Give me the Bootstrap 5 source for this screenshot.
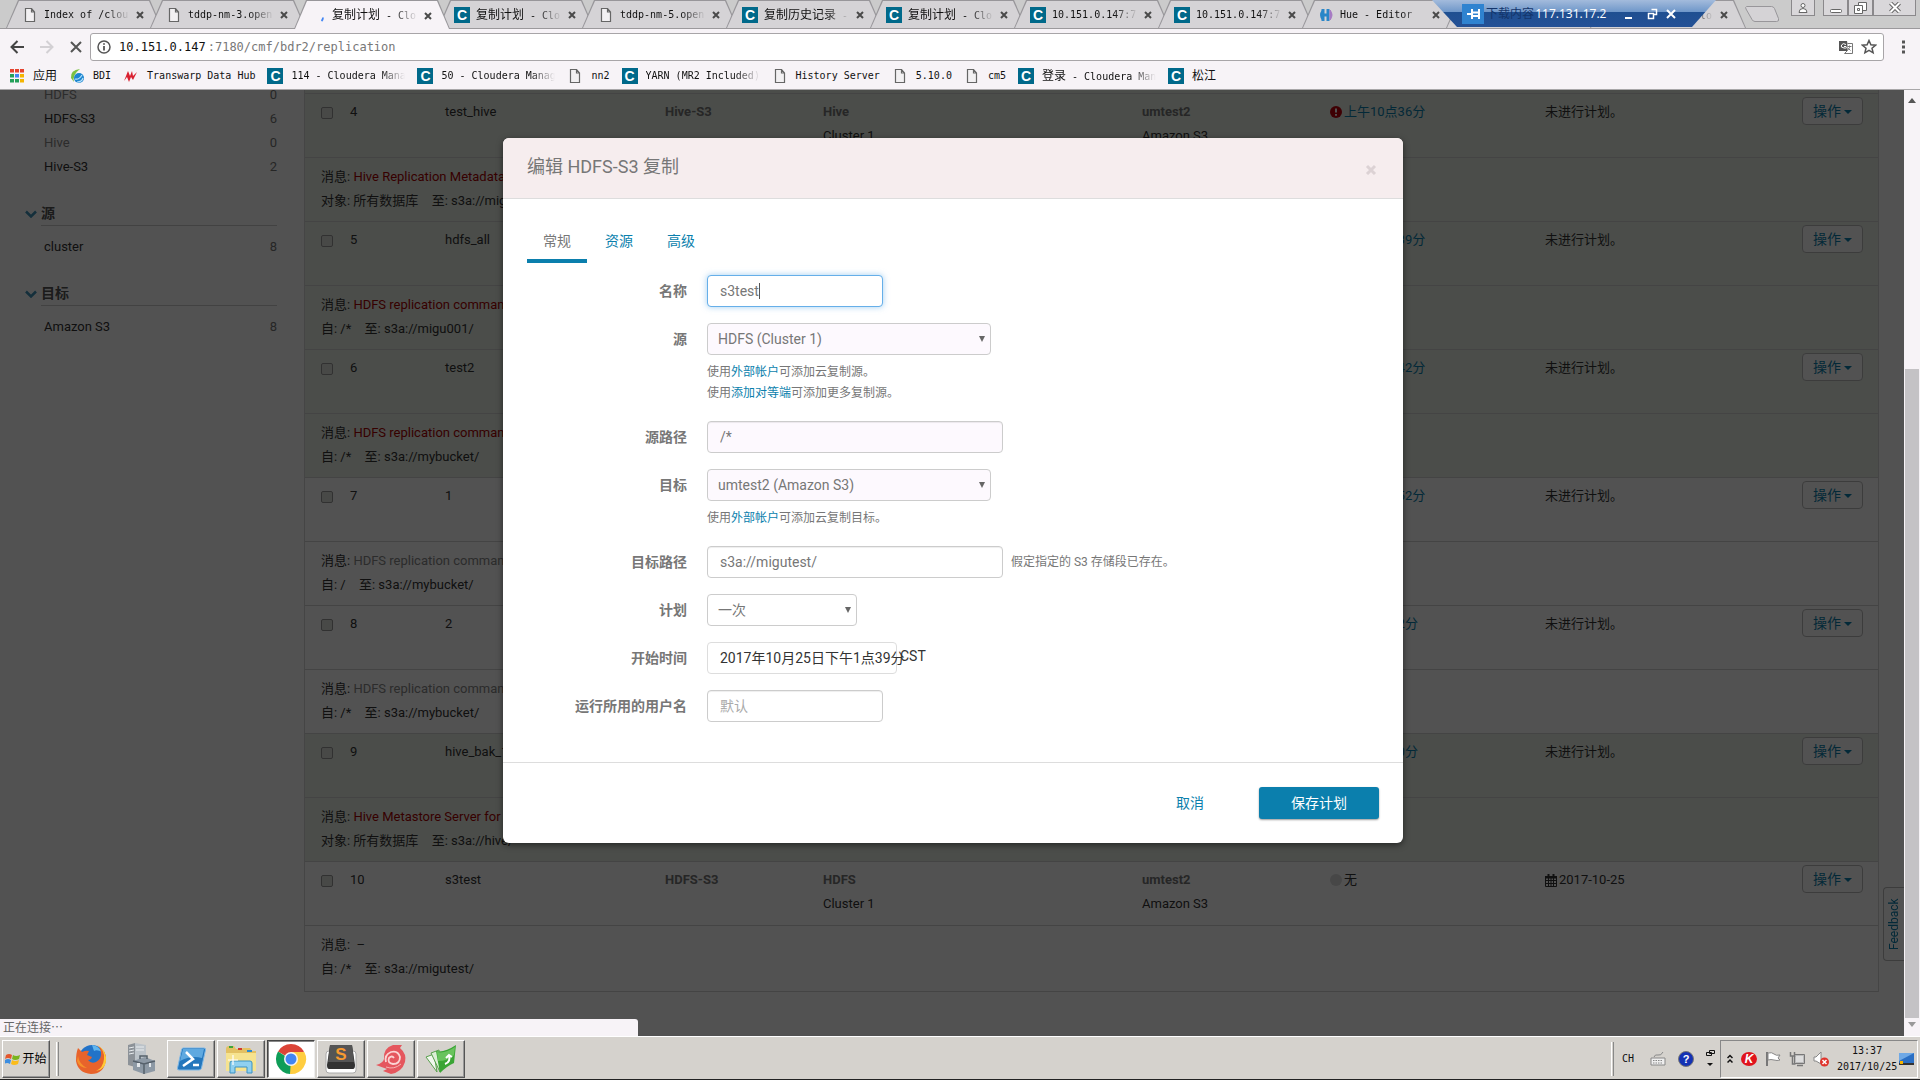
<!DOCTYPE html>
<html lang="zh-CN">
<head>
<meta charset="utf-8">
<meta name="viewport" content="width=device-width, initial-scale=1">
<title>复制计划 - Cloudera Manager</title>
<link rel="stylesheet" href="https://cdn.jsdelivr.net/npm/bootstrap@5.3.0/dist/css/bootstrap.min.css">
<style>
:root{--ui:"DejaVu Sans Mono","Noto Sans CJK SC",monospace;--web:Roboto,"Noto Sans CJK SC",sans-serif;--blue:#0b7fad;--chrome:#f7f3f7}
body{font-family:var(--web);font-size:13px;line-height:24px;color:#333;background:#fff}
a{text-decoration:none;color:var(--blue)}
svg{display:block;flex:none}
button{font-family:inherit}
.ui-font{font-family:var(--ui);font-size:10px;line-height:16px;color:#111}
.ui-font a{color:#111}
.zh{font-size:12px}
.bare{border:0;background:none;padding:0;color:inherit}
.clogo{width:16px;height:16px;background:#00698a;color:#fff;font:bold 14px/16px "Liberation Sans",sans-serif;text-align:center;flex:none}
.fade-end{white-space:nowrap;overflow:hidden;-webkit-mask-image:linear-gradient(90deg,#000 calc(100% - 24px),transparent);mask-image:linear-gradient(90deg,#000 calc(100% - 24px),transparent)}
/* tab strip */
.strip{height:29px;background:#cbcbcb;border-bottom:1px solid #9b999c;padding-left:6px}
.ctab{position:relative;width:156px;height:28px;margin-right:-12px;padding:2px 16px 0;gap:6px;flex:none}
.ctab::before,.ctab::after{content:"";position:absolute;inset:0;clip-path:polygon(0 100%,12px 0,calc(100% - 12px) 0,100% 100%);background:#98969a}
.ctab::after{inset:1px 1px 0 1px;background:#d5d3d6}
.ctab>*{position:relative;z-index:1}
.ctab.on{z-index:2;height:29px}
.ctab.on::after{background:var(--chrome)}
.ctab .ttl{width:86px}
.newtab{margin:0 0 0 10px}
.rdp{position:absolute;left:1432px;top:0;width:284px;height:27px;z-index:5;background:linear-gradient(#a3bbdc,#6f97c9 44%,#1f4f91 46%,#245196);clip-path:polygon(0 0,100% 0,calc(100% - 24px) 100%,25px 100%);color:#fff;font:12px/26px "Open Sans",sans-serif;padding:0 36px 0 30px}
.winbtn{height:16px;border:1px solid #8a888b;border-top:0;background:#d9d7da;padding:0;display:flex;align-items:center;justify-content:center}
/* toolbar */
.toolbar{height:36px;background:var(--chrome);padding:4px 12px 4px 10px}
.omni{height:28px;background:#fff;border:1px solid #a8a5a8;border-radius:3px;padding:0 6px}
.omni input{border:0;outline:0;font-family:var(--ui);font-size:12px;color:#777;background:none;width:100%}
.omni .host{font-size:12px}
.marks{height:25px;background:var(--chrome);border-bottom:1px solid #a9a7a9;padding:0 0 2px 9px;gap:12px}
.marks a{display:flex;align-items:center;gap:8px}
.marks .fade-end{max-width:114px}
.marks .plain{white-space:nowrap}
.ico16{width:16px;display:flex;justify-content:center;flex:none}
/* page */
.side{width:304px;flex:none;margin-top:-7px;padding-right:27px}
.side li{display:flex;justify-content:space-between;padding-left:44px;height:24px}
.side li span{color:#777}
.side .off a{color:#888}
.side li a{color:#333}
.side h6{margin:22px 0 9px;padding-left:25px;font-size:14px;line-height:24px;font-weight:700;color:#555}
.side h6 span{border-bottom:1px solid #ccc;height:25px}
.tail{height:3px;background:#e8efe5}
.listing{border:1px solid #d7d7d7;border-top:0;border-bottom:0;margin-right:25px}
.table.sched{table-layout:fixed;margin:0;font-size:13px;line-height:24px;color:#333;border-collapse:separate;border-spacing:0;border-bottom:1px solid #d2d2d2}
.table.sched>tbody>tr>td{border:0;border-top:1px solid #d2d2d2;padding:7px 8px 8px;height:64px;background:none;color:#333}
.table.sched>tbody>tr:nth-child(odd)>td{padding:6px 8px 9px}
.table.sched>tbody>tr:last-child>td{height:66px}
.table.sched>tbody>tr>td:first-child{padding-left:16px}
.table.sched .bad>td{background:#e8efe5}
.sched b{color:#777;font-weight:700}
.sched .err{color:#a80000}
.sched .dim{color:#888}
.sched .form-check-input{width:12px;height:12px;margin:7px 0 0;border-radius:2px;border-color:#999;background:#dfe3dc}
.cellicon{display:flex;align-items:center;gap:2px}
.late{padding-left:14px}
.opbtn{width:61px;height:28px;margin-top:-3px;border:1px solid #bbb;border-radius:4px;background:#fff;color:var(--blue);font-size:14px;line-height:22px;padding:0;white-space:nowrap}
.opbtn::after{content:"";display:inline-block;margin-left:3px;vertical-align:2px;border:4px solid transparent;border-top-color:currentColor;border-bottom:0}
.feedback{position:absolute;right:0;bottom:75px;width:21px;height:74px;border:1px solid #bbb;border-left:0;border-radius:0 4px 4px 0;background:#fff;color:var(--blue);writing-mode:vertical-rl;transform:rotate(180deg);font-size:12px;line-height:18px;padding:0;text-align:center}
.scrim{position:absolute;inset:0;background:rgba(0,0,0,.68);padding:48px 0 0 2px}
.dialog{width:900px;align-self:flex-start;background:#fff;border:0;border-radius:6px;box-shadow:0 2px 6px rgba(0,0,0,.5);overflow:hidden;color:#777;font-size:14px}
.dialog .modal-header{background:#f6edee;height:61px;padding:0 24px;border-bottom:1px solid #ddd;border-radius:0}
.dialog h4{font-size:18px;line-height:24px;font-weight:400;margin:0 0 2px}
.dialog .modal-body{padding:20px 24px 24px}
.dialog .nav{gap:2px;margin-bottom:12px}
.dialog .nav-link{padding:12px 16px 8px;line-height:20px;border:0;border-bottom:4px solid transparent;color:var(--blue)}
.dialog .nav-link.active{color:#777;border-color:#0b7fad}
.frow{display:flex;margin-bottom:16px;gap:20px}
.frow>label{width:160px;flex:none;text-align:right;font-weight:700;line-height:32px}
.frow .form-control,.frow .form-select{height:32px;padding:0 12px;font-size:14px;line-height:20px;color:#777;border:1px solid #ccc;border-radius:4px;background-color:#fff;box-shadow:inset 0 1px 1px rgba(0,0,0,.07)}
.frow .form-select{padding:0 24px 0 10px;box-shadow:none;background-image:url("data:image/svg+xml,%3Csvg xmlns='http://www.w3.org/2000/svg' viewBox='0 0 6 6'%3E%3Cpath d='M0 0h6L3 6z' fill='%23666'/%3E%3C/svg%3E");background-size:6px 6px;background-position:right 5px center}
.frow .tint{background-color:#fdf9fe}
.frow .focused{border-color:#66afe9;box-shadow:0 0 6px rgba(102,175,233,.6)}
.frow ::placeholder{color:#aaa}
.w176{width:176px}.w284{width:284px}.w296{width:296px}.w150{width:150px}
.caret{position:absolute;left:52px;top:8px;width:1px;height:16px;background:#555}
.hint{font-size:12px;line-height:21px;padding:7px 0 1px}
.hint-side{font-size:12px;line-height:32px;margin-left:8px}
.when{width:190px;height:32px;border:1px solid #ddd;border-radius:4px;background:#fff;color:#333;text-align:left;padding:0 12px;white-space:nowrap}
.zone{color:#333;line-height:28px;margin-left:3px}
.dialog .modal-footer{height:81px;padding:0 24px;border-top:1px solid #ddd;gap:9px}
.dialog .modal-footer>*{margin:0;width:120px;height:32px;padding:0;font-size:14px;border-radius:3px}
.dialog .btn-link{color:var(--blue);text-decoration:none}
.dialog .btn-primary{background:#0b7fad;border:0;box-shadow:0 1px 2px rgba(0,0,0,.4)}
.vbar{width:16px;background:var(--chrome);flex:none;padding:8px 0}
.vbar i{width:14px;background:#c4c2c5}
.gap-top{flex:266 0 0}.thumb{flex:652 0 0}
.statusbub{position:absolute;left:0;bottom:0;width:638px;height:17px;border-radius:0 3px 0 0;background:var(--chrome);color:#666;font-size:12px;line-height:19px;padding-left:3px}
/* taskbar */
.taskbar{height:44px;flex:none;background:#d5d2cd;border-top:1px solid #fff;border-bottom:1px solid #222;padding:3px 2px 2px}
.tbtn{width:48px;height:38px;margin-right:2px;padding:0;background:#d5d2cd;border:1px solid;border-color:#fff #555 #555 #fff;box-shadow:inset -1px -1px #999;display:flex;align-items:center;justify-content:center;flex:none}
.tbtn.flat{border-color:transparent;box-shadow:none}
.tbtn.down{background:#fff;border-color:#444 #eee #eee #444;box-shadow:inset 1px 1px #888}
.grip{width:3px;height:34px;border-left:1px solid #fff;border-right:1px solid #888}
.start{width:48px;gap:1px;font-size:12px;color:#000}
.tray{height:38px;width:198px;border:1px solid;border-color:#888 #fff #fff #888;padding:0 0 0 6px;gap:8px}
.clockbox{gap:2px}
</style>
<script src="https://cdn.jsdelivr.net/npm/bootstrap@5.3.0/dist/js/bootstrap.bundle.min.js"></script>
</head>
<body class="d-flex flex-column vh-100 overflow-hidden">
<svg width="0" height="0" class="position-absolute" aria-hidden="true">
<symbol id="doc" viewBox="0 0 12 14"><path d="M1.5.5h6l3 3.500v9.500h-9zM7.500.5v3.500h3" fill="#f2f0f2" stroke="#666" stroke-width="1.200"/></symbol>
<symbol id="ex" viewBox="0 0 8 8"><path d="M1 1l6 6M7 1L1 7" stroke="#4a4a4a" stroke-width="2"/></symbol>
<symbol id="chev" viewBox="0 0 12 8"><path d="M1 1.500l5 5 5-5" fill="none" stroke="#3f91b8" stroke-width="2.500"/></symbol>
</svg>

<header class="position-relative ui-font">
<div class="strip d-flex">
<div class="ctab d-flex align-items-center"><span class="ico16"><svg width="12" height="14"><use href="#doc"/></svg></span><a href="#" class="ttl fade-end">Index of /clou</a><button class="bare" aria-label="关闭"><svg width="8" height="8"><use href="#ex"/></svg></button></div>
<div class="ctab d-flex align-items-center"><span class="ico16"><svg width="12" height="14"><use href="#doc"/></svg></span><a href="#" class="ttl fade-end">tddp-nm-3.open</a><button class="bare" aria-label="关闭"><svg width="8" height="8"><use href="#ex"/></svg></button></div>
<div class="ctab on d-flex align-items-center"><span class="ico16"><svg width="16" height="16"><path d="M13 9.500q0 2-1.500 3.500" stroke="#4285f4" stroke-width="1.800" fill="none"/></svg></span><a href="#" class="ttl fade-end"><span class="zh">复制计划</span> - Clo</a><button class="bare" aria-label="关闭"><svg width="8" height="8"><use href="#ex"/></svg></button></div>
<div class="ctab d-flex align-items-center"><span class="clogo">C</span><a href="#" class="ttl fade-end"><span class="zh">复制计划</span> - Clo</a><button class="bare" aria-label="关闭"><svg width="8" height="8"><use href="#ex"/></svg></button></div>
<div class="ctab d-flex align-items-center"><span class="ico16"><svg width="12" height="14"><use href="#doc"/></svg></span><a href="#" class="ttl fade-end">tddp-nm-5.open</a><button class="bare" aria-label="关闭"><svg width="8" height="8"><use href="#ex"/></svg></button></div>
<div class="ctab d-flex align-items-center"><span class="clogo">C</span><a href="#" class="ttl fade-end"><span class="zh">复制历史记录</span> -</a><button class="bare" aria-label="关闭"><svg width="8" height="8"><use href="#ex"/></svg></button></div>
<div class="ctab d-flex align-items-center"><span class="clogo">C</span><a href="#" class="ttl fade-end"><span class="zh">复制计划</span> - Clo</a><button class="bare" aria-label="关闭"><svg width="8" height="8"><use href="#ex"/></svg></button></div>
<div class="ctab d-flex align-items-center"><span class="clogo">C</span><a href="#" class="ttl fade-end">10.151.0.147:7</a><button class="bare" aria-label="关闭"><svg width="8" height="8"><use href="#ex"/></svg></button></div>
<div class="ctab d-flex align-items-center"><span class="clogo">C</span><a href="#" class="ttl fade-end">10.151.0.147:7</a><button class="bare" aria-label="关闭"><svg width="8" height="8"><use href="#ex"/></svg></button></div>
<div class="ctab d-flex align-items-center"><svg width="16" height="16"><path d="M5 2v12M10 2v12M5 8h6" stroke="#2a86c8" stroke-width="3"/><path d="M4 3Q0 8 4 13" fill="#2a86c8"/><path d="M12 3q4 5 0 10z" fill="#a77bc4" stroke="#a77bc4"/></svg><a href="#" class="ttl fade-end">Hue - Editor</a><button class="bare" aria-label="关闭"><svg width="8" height="8"><use href="#ex"/></svg></button></div>
<div class="ctab" aria-hidden="true"></div>
<div class="ctab d-flex align-items-center"><span class="clogo">C</span><a href="#" class="ttl fade-end"><span class="zh">复制计划</span> - Clo</a><button class="bare" aria-label="关闭"><svg width="8" height="8"><use href="#ex"/></svg></button></div>
<button class="bare newtab" aria-label="新标签页"><svg width="36" height="20"><path d="M2.500 2.500h25q2 0 3 2l4 10q1 3-2 3H11q-2 0-3-2L2 5q-1-2 .5-2.500z" fill="#d5d3d6" stroke="#98969a"/></svg></button>
<div class="ms-auto d-flex pe-1">
<button class="winbtn me-2" style="width:24px" aria-label="用户"><svg width="12" height="12"><circle cx="6" cy="3.500" r="2" fill="#fff" stroke="#666"/><path d="M2 10.500q0-4 4-4t4 4z" fill="#fff" stroke="#666"/></svg></button>
<button class="winbtn" style="width:25px" aria-label="最小化"><svg width="12" height="12"><rect x=".5" y="7.500" width="11" height="3" rx="1" fill="#fff" stroke="#666"/></svg></button>
<button class="winbtn" style="width:25px" aria-label="还原"><svg width="13" height="12"><path d="M4.500.5h8v8h-8z" fill="#fff" stroke="#666"/><path d="M.5 3.500h8v8h-8z" fill="#fff" stroke="#666"/><path d="M3.500 6.500h2v2h-2z" fill="none" stroke="#666"/></svg></button>
<button class="winbtn" style="width:43px" aria-label="关闭窗口"><svg width="12" height="11"><path d="M1.500 1l9 9M10.500 1l-9 9" stroke="#666" stroke-width="4"/><path d="M1.500 1l9 9M10.500 1l-9 9" stroke="#fff" stroke-width="2"/></svg></button>
</div>
</div>
<div class="rdp d-flex align-items-center justify-content-between">
<svg width="22" height="20"><path d="M0 0h22v20H0z" fill="#2f83d0"/><path d="M5 10h5M10 5v10M17 5v10M10 12h7M10 8.500h7" stroke="#fff" stroke-width="2"/></svg>
<span class="zh" style="color:#14356b" aria-hidden="true">下载内容</span>
<span>117.131.17.2</span>
<svg width="56" height="16" class="ms-3"><path d="M1 12h7M51 4l-8 8M43 4l8 8" stroke="#fff" stroke-width="2"/><path d="M27.500 3.500h5v5h-3M24.500 7.500h5v5h-5z" fill="none" stroke="#fff" stroke-width="1.500"/></svg>
</div>
<div class="toolbar d-flex align-items-center">
<button class="bare me-3" aria-label="后退"><svg width="14" height="14"><path d="M14 7H2M7.500 1L1.500 7l6 6" fill="none" stroke="#444" stroke-width="2"/></svg></button>
<button class="bare me-3" aria-label="前进"><svg width="14" height="14"><path d="M0 7h12M6.500 1l6 6-6 6" fill="none" stroke="#d3d0d4" stroke-width="2"/></svg></button>
<button class="bare" aria-label="停止"><svg width="12" height="14"><path d="M1 2l10 10M11 2L1 12" stroke="#555" stroke-width="2"/></svg></button>
<div class="omni d-flex align-items-center flex-grow-1 ms-2">
<svg width="14" height="14" class="me-2"><circle cx="7" cy="7" r="6" fill="none" stroke="#555" stroke-width="1.500"/><path d="M7 6v4.500M7 3.200v1.600" stroke="#555" stroke-width="1.800"/></svg>
<span class="host">10.151.0.147</span><input aria-label="地址" value=":7180/cmf/bdr2/replication">
<svg width="14" height="14" class="me-2"><path d="M0 1h8l2 10H0z" fill="#555"/><path d="M8.500 3.500h5v10h-8l3-3" fill="#fff" stroke="#777"/><path d="M7 4.500Q4 2.500 2.500 5T5 8t2-1.500H5" stroke="#fff" fill="none"/><path d="M8.500 6.500h4M10.500 5.500v2l-2 3M9.500 8.500l2 2" stroke="#777" fill="none"/></svg>
<svg width="16" height="16"><path d="M8 1.500l1.900 4.300 4.600.4-3.500 3 1.100 4.600L8 11.400l-4.100 2.400L5 9.200l-3.500-3 4.600-.4z" fill="none" stroke="#555" stroke-width="1.500"/></svg>
</div>
<button class="bare ps-3" aria-label="菜单"><svg width="8" height="16"><path d="M2 1.500h3v3H2zM2 6.500h3v3H2zM2 11.500h3v3H2z" fill="#555"/></svg></button>
</div>
<nav class="marks d-flex align-items-center">
<a href="#"><span class="ico16"><svg width="14" height="14"><path d="M0 0h4v3.500H0zM5 0h4v3.500H5zM10 0h4v3.500h-4z" fill="#e5432f"/><path d="M0 5h4v3.500H0z" fill="#24a05a"/><path d="M5 5h4v3.500H5z" fill="#4285f4"/><path d="M10 5h4v3.500h-4z" fill="#f5b400"/><path d="M0 10h4v3.500H0zM5 10h4v3.500H5z" fill="#24a05a"/><path d="M10 10h4v3.500h-4z" fill="#f5b400"/></svg></span><span class="zh">应用</span></a>
<a href="#"><svg width="16" height="16"><path d="M11 1Q1 2 2 10l3 4Q3 7 11 1z" fill="#7cc142"/><circle cx="10" cy="10" r="5" fill="#1d86d0"/><path d="M6 11q4 1 7-4M8 14q5 0 6-4" stroke="#b7e0fa" stroke-width="1.200" fill="none"/></svg><span>BDI</span></a>
<a href="#"><svg width="16" height="16"><path d="M1 13L5 3l2 5 2-5 1 5 4-4-4 8-2-3-2 5-2-5z" fill="#d92030"/></svg><span class="plain">Transwarp Data Hub</span></a>
<a href="#"><span class="clogo">C</span><span class="fade-end">114 - Cloudera Mana</span></a>
<a href="#"><span class="clogo">C</span><span class="fade-end">50 - Cloudera Manag</span></a>
<a href="#"><span class="ico16"><svg width="12" height="14"><use href="#doc"/></svg></span><span>nn2</span></a>
<a href="#"><span class="clogo">C</span><span class="fade-end">YARN (MR2 Included)</span></a>
<a href="#"><span class="ico16"><svg width="12" height="14"><use href="#doc"/></svg></span><span class="plain">History Server</span></a>
<a href="#"><span class="ico16"><svg width="12" height="14"><use href="#doc"/></svg></span><span>5.10.0</span></a>
<a href="#"><span class="ico16"><svg width="12" height="14"><use href="#doc"/></svg></span><span>cm5</span></a>
<a href="#"><span class="clogo">C</span><span class="fade-end"><span class="zh">登录</span> - Cloudera Man</span></a>
<a href="#"><span class="clogo">C</span><span class="zh">松江</span></a>
</nav>
</header>

<main class="flex-grow-1 d-flex position-relative overflow-hidden">
<div class="flex-grow-1 position-relative overflow-hidden d-flex">
<aside class="side">
<ul class="list-unstyled mb-0">
<li class="off"><a href="#">HDFS</a><span>0</span></li>
<li><a href="#">HDFS-S3</a><span>6</span></li>
<li class="off"><a href="#">Hive</a><span>0</span></li>
<li><a href="#">Hive-S3</a><span>2</span></li>
</ul>
<h6 class="d-flex align-items-center"><svg width="12" height="8" class="me-1"><use href="#chev"/></svg><span class="flex-grow-1">源</span></h6>
<ul class="list-unstyled mb-0"><li><a href="#">cluster</a><span>8</span></li></ul>
<h6 class="d-flex align-items-center"><svg width="12" height="8" class="me-1"><use href="#chev"/></svg><span class="flex-grow-1">目标</span></h6>
<ul class="list-unstyled mb-0"><li><a href="#">Amazon S3</a><span>8</span></li></ul>
</aside>
<section class="flex-grow-1">
<div class="listing">
<div class="tail"></div>
<table class="table sched">
<colgroup><col style="width:37px"><col style="width:95px"><col style="width:220px"><col style="width:158px"><col style="width:319px"><col style="width:188px"><col style="width:215px"><col><col style="width:84px"></colgroup>
<tbody>
<tr class="bad"><td><input class="form-check-input" type="checkbox" aria-label="选择 4"></td><td>4</td><td>test_hive</td><td><b>Hive-S3</b></td><td><b>Hive</b><br>Cluster 1</td><td><b>umtest2</b><br>Amazon S3</td><td><div class="cellicon"><svg width="12" height="12"><circle cx="6" cy="6" r="6" fill="#c0000c"/><path d="M6 2.500v4M6 8v1.800" stroke="#fff" stroke-width="2"/></svg><a href="#">上午10点36分</a></div></td><td>未进行计划。</td><td><button class="opbtn">操作</button></td></tr>
<tr class="bad"><td colspan="9">消息: <span class="err">Hive Replication Metadata</span><br>对象: 所有数据库&emsp;至: s3a://migu</td></tr>
<tr class="bad"><td><input class="form-check-input" type="checkbox" aria-label="选择 5"></td><td>5</td><td>hdfs_all</td><td></td><td></td><td></td><td><a href="#" class="late">上午10点39分</a></td><td>未进行计划。</td><td><button class="opbtn">操作</button></td></tr>
<tr class="bad"><td colspan="9">消息: <span class="err">HDFS replication command</span><br>自: /*&emsp;至: s3a://migu001/</td></tr>
<tr class="bad"><td><input class="form-check-input" type="checkbox" aria-label="选择 6"></td><td>6</td><td>test2</td><td></td><td></td><td></td><td><a href="#" class="late">上午10点42分</a></td><td>未进行计划。</td><td><button class="opbtn">操作</button></td></tr>
<tr class="bad"><td colspan="9">消息: <span class="err">HDFS replication command</span><br>自: /*&emsp;至: s3a://mybucket/</td></tr>
<tr><td><input class="form-check-input" type="checkbox" aria-label="选择 7"></td><td>7</td><td>1</td><td></td><td></td><td></td><td><a href="#" class="late">上午10点52分</a></td><td>未进行计划。</td><td><button class="opbtn">操作</button></td></tr>
<tr><td colspan="9">消息: <span class="dim">HDFS replication command</span><br>自: /&emsp;至: s3a://mybucket/</td></tr>
<tr><td><input class="form-check-input" type="checkbox" aria-label="选择 8"></td><td>8</td><td>2</td><td></td><td></td><td></td><td><a href="#" class="late">上午9点52分</a></td><td>未进行计划。</td><td><button class="opbtn">操作</button></td></tr>
<tr><td colspan="9">消息: <span class="dim">HDFS replication command</span><br>自: /*&emsp;至: s3a://mybucket/</td></tr>
<tr class="bad"><td><input class="form-check-input" type="checkbox" aria-label="选择 9"></td><td>9</td><td>hive_bak_1</td><td></td><td></td><td></td><td><a href="#" class="late">上午9点30分</a></td><td>未进行计划。</td><td><button class="opbtn">操作</button></td></tr>
<tr class="bad"><td colspan="9">消息: <span class="err">Hive Metastore Server for s</span><br>对象: 所有数据库&emsp;至: s3a://hive/</td></tr>
<tr><td><input class="form-check-input" type="checkbox" aria-label="选择 10"></td><td>10</td><td>s3test</td><td><b>HDFS-S3</b></td><td><b>HDFS</b><br>Cluster 1</td><td><b>umtest2</b><br>Amazon S3</td><td><div class="cellicon"><svg width="12" height="12"><circle cx="6" cy="6" r="6" fill="#dcdcdc"/></svg>无</div></td><td><div class="cellicon"><svg width="12" height="13"><path d="M.5 3.500h11v9H.5zM.5 6.500h11M.5 9.500h11M3.500 3.500v9M6 3.500v9M8.500 3.500v9" fill="none" stroke="#333"/><path d="M0 2h12v2.500H0zM2.500 0h2v3h-2zM7.500 0h2v3h-2z" fill="#333"/></svg>2017-10-25</div></td><td><button class="opbtn">操作</button></td></tr>
<tr><td colspan="9">消息: &nbsp;–<br>自: /*&emsp;至: s3a://migutest/</td></tr>
</tbody>
</table>
</div>
</section>
<button class="feedback">Feedback</button>

<div class="scrim d-flex justify-content-center">
<div class="modal-content dialog" role="dialog" aria-labelledby="dlgTitle">
<div class="modal-header d-flex align-items-center justify-content-between">
<h4 id="dlgTitle">编辑 HDFS-S3 复制</h4>
<button class="bare" aria-label="关闭"><svg width="16" height="14"><path d="M4 5l8 8M12 5l-8 8" stroke="#dcd2d4" stroke-width="3"/></svg></button>
</div>
<div class="modal-body">
<ul class="nav">
<li><a class="nav-link active" href="#">常规</a></li>
<li><a class="nav-link" href="#">资源</a></li>
<li><a class="nav-link" href="#">高级</a></li>
</ul>
<form>
<div class="frow"><label for="fName">名称</label><div class="position-relative"><input id="fName" class="form-control focused w176" value="s3test"><i class="caret"></i></div></div>
<div class="frow"><label for="fSrc">源</label><div><select id="fSrc" class="form-select tint w284"><option>HDFS (Cluster 1)</option></select>
<div class="hint">使用<a href="#">外部帐户</a>可添加云复制源。<br>使用<a href="#">添加对等端</a>可添加更多复制源。</div></div></div>
<div class="frow"><label for="fSrcPath">源路径</label><input id="fSrcPath" class="form-control tint w296" value="/*"></div>
<div class="frow"><label for="fDst">目标</label><div><select id="fDst" class="form-select tint w284"><option>umtest2 (Amazon S3)</option></select>
<div class="hint">使用<a href="#">外部帐户</a>可添加云复制目标。</div></div></div>
<div class="frow"><label for="fDstPath">目标路径</label><div class="d-flex"><input id="fDstPath" class="form-control w296" value="s3a://migutest/"><span class="hint-side">假定指定的 S3 存储段已存在。</span></div></div>
<div class="frow"><label for="fPlan">计划</label><select id="fPlan" class="form-select w150"><option>一次</option></select></div>
<div class="frow"><label for="fWhen">开始时间</label><div class="d-flex"><button type="button" id="fWhen" class="when">2017年10月25日下午1点39分</button><span class="zone">CST</span></div></div>
<div class="frow"><label for="fUser">运行所用的用户名</label><input id="fUser" class="form-control w176" placeholder="默认"></div>
</form>
</div>
<div class="modal-footer d-flex justify-content-end">
<button class="btn btn-link">取消</button>
<button class="btn btn-primary">保存计划</button>
</div>
</div>
</div>
<div class="statusbub">正在连接⋯</div>
</div>
<div class="vbar d-flex flex-column align-items-center">
<svg width="8" height="6"><path d="M4 0l4 5H0z" fill="#555"/></svg>
<span class="gap-top"></span><i class="thumb"></i>
<svg width="8" height="6" class="mt-1"><path d="M0 0h8L4 5z" fill="#999"/></svg>
</div>
</main>

<footer class="taskbar d-flex align-items-center ui-font">
<button class="tbtn start"><svg width="16" height="16"><path d="M1 4q3-2 6 0L6 8Q3 6 0 8z" fill="#e4572e"/><path d="M8 4q3 2 7 0l-1 4q-4 2-7 0z" fill="#7ab51d"/><path d="M0 9q3-2 6 0l-1 4q-3-2-6 0z" fill="#3c8de0"/><path d="M7 9q3 2 7 0l-1 4q-4 2-7 0z" fill="#fbbc1a"/></svg>开始</button>
<span class="grip ms-1 me-2"></span>
<button class="tbtn flat" aria-label="Firefox"><svg width="32" height="32"><circle cx="17" cy="15" r="13" fill="#2273c8"/><path d="M17 2a13 13 0 0 1 10 7q-5-3-8-1z" fill="#5fb5ee"/><path d="M3 5l4 4q4-2 7-1l-2 4 5 2q-1 3-4 3 3 4 8 2 6-3 5-10-1-5-4-7Q32 8 31 17q-2 14-15 14Q3 30 1 18 1 10 3 5z" fill="#e8632b"/><path d="M22 2q8 5 7 14-1 9-8 12 11-2 10-14Q29 5 22 2z" fill="#ffc934"/><path d="M3 13q1 8 9 12-8 0-10-7z" fill="#f5912c"/></svg></button>
<button class="tbtn flat" aria-label="服务器管理器"><svg width="32" height="32"><path d="M3 2l7-2v24l-7-2z" fill="#8c9298"/><path d="M10 0l11 2v22H10z" fill="#bcc3c9"/><path d="M4 5l5-1M4 8l5-1M4 11l5-1M11 4h8M11 7h8" stroke="#e8ecef"/><path d="M8 18l12-4 10 4v10l-11 3-11-4z" fill="#8d99a5"/><path d="M8 18l11 3 11-3M19 21v10M15 16v-3h7v3" stroke="#56616b" stroke-width="1.500" fill="none"/><path d="M12 20h3v4h-3zM24 20h2v4h-2z" fill="#e1e6ea"/></svg></button>
<button class="tbtn" aria-label="PowerShell"><svg width="32" height="32"><path d="M8 5h21q2 0 1.500 2l-4 18q-.5 2-2.500 2H4q-2 0-1.500-2l4-18Q7 5 8 5z" fill="#2477bd" stroke="#7fb8e6"/><path d="M8 6h21l-2 9Q16 12 5 18z" fill="#5fa9e0"/><path d="M11 9l7 7-10 7M18 22h6" fill="none" stroke="#fff" stroke-width="2.500"/></svg></button>
<button class="tbtn" aria-label="资源管理器"><svg width="34" height="34"><path d="M2 7q0-3 3-3h5l2 3h5l2-1h7l2 3h4v20H2z" fill="#e3c163"/><path d="M2 11h30v18H2z" fill="#f6e38f"/><path d="M5 4h4v2H5z" fill="#3da53a"/><path d="M14 6h4v2h-4z" fill="#d33a2c"/><path d="M23 8h5v2h-5z" fill="#2b8bd0"/><path d="M6 31V21q0-2 2-2h18q2 0 2 2v10h-5v-6H11v6z" fill="#8fd0ef" stroke="#3b93c4"/><path d="M9 13v10M4 18h10" stroke="#fff" stroke-width="1.200"/></svg></button>
<button class="tbtn down" aria-label="Chrome"><svg width="32" height="32"><path d="M16 16L3 8.500A15 15 0 0 1 29 8.500z" fill="#db4437"/><path d="M16 16h-1L3 8.500A15 15 0 0 0 15 31l6-11z" fill="#0f9d58"/><path d="M16 16V9h13.300A15 15 0 0 1 15 31z" fill="#ffcd40"/><circle cx="16" cy="16" r="7" fill="#f5f5f5"/><circle cx="16" cy="16" r="5.500" fill="#4285f4"/></svg></button>
<button class="tbtn" aria-label="Sublime Text"><svg width="32" height="32"><rect x="1" y="8" width="30" height="22" rx="3" fill="#fff" stroke="#aaa"/><path d="M5 2h22l3 20q0 4-2 4H4q-2 0-2-4z" fill="#333"/><path d="M5 2h22l2 17H3z" fill="#555"/><text x="16" y="17" text-anchor="middle" font-family="Liberation Sans" font-weight="bold" font-size="17" fill="#f79a30">S</text></svg></button>
<button class="tbtn" aria-label="终端工具"><svg width="32" height="32"><path d="M1 22Q8 20 9 16 8 5 18 2l9 0-2 3q7 6 5 14-3 10-14 12l-8-3 4-2z" fill="#e5575e"/><path d="M19 15q-2-3-5 0-2 5 4 6 7 0 7-7-2-7-9-5-7 3-5 10" fill="none" stroke="#fbd5d4" stroke-width="1.800"/><path d="M11 24q8 3 15-3" stroke="#f7b3b2" fill="none"/></svg></button>
<button class="tbtn" aria-label="文件传输"><svg width="32" height="32"><path d="M1 14l8-3 3 18z" fill="#f1f7ee" stroke="#58a04c"/><path d="M6 10l8-3 1 22z" fill="#dcefd6" stroke="#58a04c"/><path d="M11 8q8 2 20-6l-2 18q-7 3-14 10z" fill="#3aa535"/><path d="M12 9q8 2 18-5l-1 8q-6 6-16 6z" fill="#69c35d"/><path d="M20 21q6-2 4-9m-3 3l3-3 3 2" stroke="#fff" stroke-width="2" fill="none"/></svg></button>
<span class="grip ms-auto me-2"></span>
<span class="me-3">CH</span>
<svg width="16" height="16" class="me-2"><path d="M1 7h14v7H1z" fill="#eee" stroke="#888"/><path d="M3 9.500h10M3 12h10" stroke="#888" stroke-dasharray="1.500 1"/><path d="M4 6q1-3 4-2t5-3" stroke="#888" fill="none"/></svg>
<svg width="16" height="16" class="mx-1"><circle cx="8" cy="8" r="7.500" fill="#1432b4" stroke="#777"/><text x="8" y="12" text-anchor="middle" font-family="Liberation Sans" font-weight="bold" font-size="11" fill="#fff">?</text></svg>
<svg width="10" height="20" class="ms-2 me-1"><path d="M3.500 1.500h5v3h-5zM.5 3.500h5v3h-5z" fill="#d5d2cd" stroke="#111"/><path d="M1 14h6l-3 3z" fill="#111"/></svg>
<div class="tray d-flex align-items-center">
<svg width="6" height="10"><path d="M.5 4L3 1.500 5.500 4M.5 8.500L3 6l2.500 2.500" fill="none" stroke="#111" stroke-width="1.500"/></svg>
<svg width="16" height="16"><ellipse cx="8" cy="8" rx="8" ry="7" fill="#e0141c"/><text x="8" y="12" text-anchor="middle" font-family="Liberation Sans" font-weight="bold" font-style="italic" font-size="12" fill="#fff">K</text></svg>
<svg width="16" height="16"><path d="M2 1v14" stroke="#777" stroke-width="2"/><path d="M3 2q4-1 6 1t6 1l-2 3 2 2q-3 1-6 0t-6 0z" fill="#fff" stroke="#888"/></svg>
<svg width="16" height="16"><path d="M5.500 3.500h10v9h-10z" fill="#bbb" stroke="#777"/><path d="M7 5h7v6H7z" fill="#ddd"/><path d="M8 14.500h6M1.500 1v4h4V1M3.500 5v8h3" fill="none" stroke="#777" stroke-width="1.500"/></svg>
<svg width="16" height="16"><path d="M1 6h2l5-5v12L3 10H1z" fill="#fff" stroke="#888"/><circle cx="11.500" cy="11" r="4.500" fill="#e0342c"/><path d="M9.500 9l4 4M13.500 9l-4 4" stroke="#fff" stroke-width="1.500"/></svg>
<div class="clockbox d-flex align-items-center"><span class="text-center">13:37<br>2017/10/25</span>
<svg width="15" height="14"><path d="M0 1h15v10H0z" fill="#2a6fc4"/><path d="M0 1h15L0 9z" fill="#6fa9e6"/><path d="M0 11h15v2H0z" fill="#333"/><path d="M1 9h3v3H1z" fill="#f5b400"/></svg></div>
</div>
</footer>
</body>
</html>
